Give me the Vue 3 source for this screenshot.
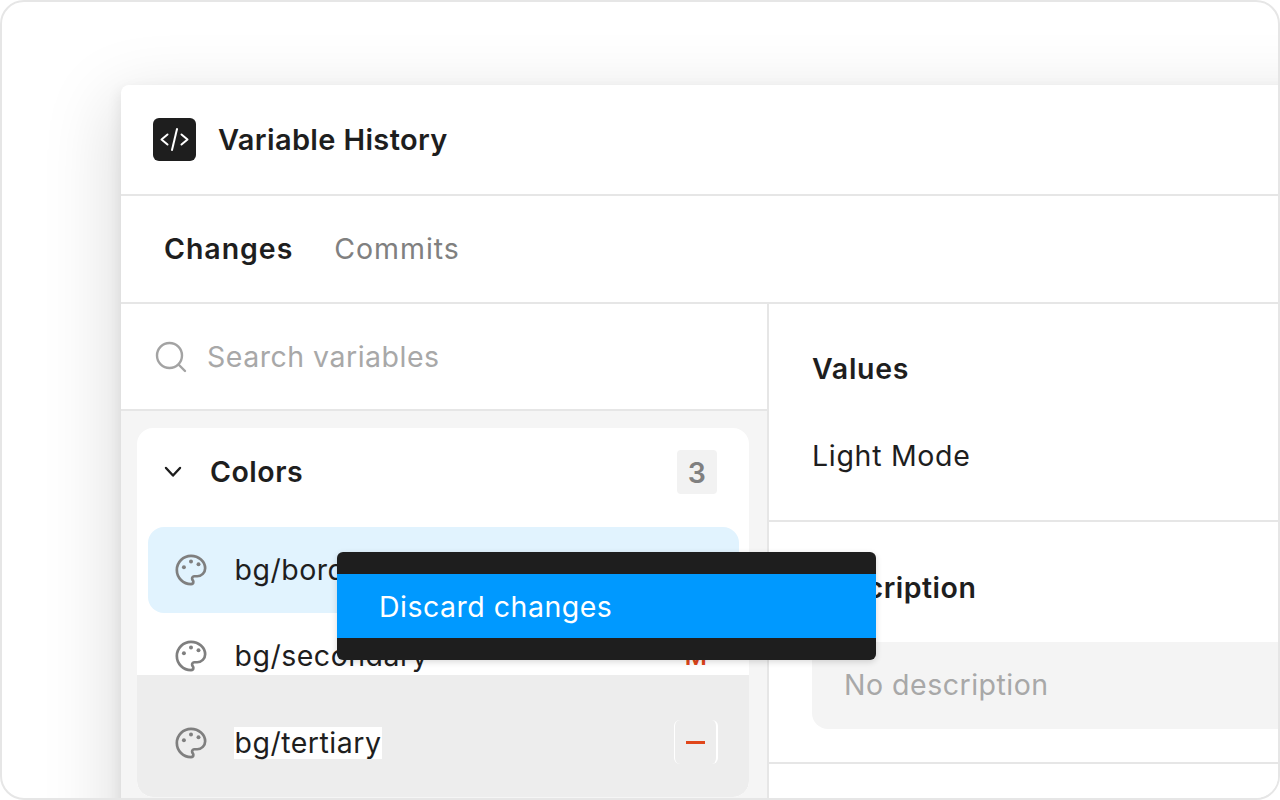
<template>
  <div class="frame">
    <div class="window">
      <header class="app-header">
        <div class="app-logo">
          <svg width="43" height="43" viewBox="0 0 43 43" fill="none" stroke="#fff" stroke-width="2" stroke-linecap="round" stroke-linejoin="round">
            <path d="M14.500 16.500L8.500 21.500L14.500 26.500" />
            <path d="M28.500 16.500L34.500 21.500L28.500 26.500" />
            <path d="M24 11L19 32" />
          </svg>
        </div>
        <h1 class="app-title">Variable History</h1>
      </header>

      <nav class="tabs">
        <span class="tab active">Changes</span>
        <span class="tab">Commits</span>
      </nav>

      <div class="body">
        <aside class="sidebar">
          <div class="search">
            <svg width="32" height="32" viewBox="0 0 32 32" fill="none" stroke="#a3a3a3" stroke-width="2.400" stroke-linecap="round">
              <circle cx="14.500" cy="14.500" r="12.500" />
              <path d="M24 24L30 30" />
            </svg>
            <span class="search-text">Search variables</span>
          </div>

          <div class="list-area">
            <div class="card">
              <div class="card-head">
                <svg class="chevron" width="18" height="12" viewBox="0 0 18 12" fill="none" stroke="#1e1e1e" stroke-width="2.400" stroke-linecap="round" stroke-linejoin="round">
                  <path d="M2 2L9 9.500L16 2" />
                </svg>
                <span class="card-title">Colors</span>
                <span class="count">3</span>
              </div>

              <div class="row selected">
                <svg class="palette" width="34" height="34" viewBox="0 0 24 24" fill="none" stroke="#7f7f7f" stroke-width="1.900" stroke-linejoin="round">
                  <path :d="palettePath" />
                  <circle v-for="d in paletteDots" :key="d[0]" :cx="d[0]" :cy="d[1]" r="1.400" fill="#7f7f7f" stroke="none" />
                </svg>
                <span class="row-name">bg/border</span>
              </div>

              <div class="row-clip">
                <div class="row">
                  <svg class="palette" width="34" height="34" viewBox="0 0 24 24" fill="none" stroke="#7f7f7f" stroke-width="1.900" stroke-linejoin="round">
                    <path :d="palettePath" />
                    <circle v-for="d in paletteDots" :key="d[0]" :cx="d[0]" :cy="d[1]" r="1.400" fill="#7f7f7f" stroke="none" />
                  </svg>
                  <span class="row-name">bg/secondary</span>
                  <span class="status">M</span>
                </div>
              </div>

              <div class="row hovered">
                <svg class="palette" width="34" height="34" viewBox="0 0 24 24" fill="none" stroke="#7f7f7f" stroke-width="1.900" stroke-linejoin="round">
                  <path :d="palettePath" />
                  <circle v-for="d in paletteDots" :key="d[0]" :cx="d[0]" :cy="d[1]" r="1.400" fill="#7f7f7f" stroke="none" />
                </svg>
                <span class="row-name lit">bg/tertiary</span>
                <span class="status dash"><i></i></span>
              </div>
            </div>
          </div>
        </aside>

        <main class="detail">
          <section class="values">
            <h2 class="detail-title">Values</h2>
            <p class="mode">Light Mode</p>
          </section>
          <section class="description">
            <h2 class="detail-title">Description</h2>
            <div class="desc-box">No description</div>
          </section>
        </main>

        <div class="context-menu">
          <div class="menu-item">Discard changes</div>
        </div>
      </div>
    </div>
  </div>
</template>

<script setup>
const palettePath =
  'M12 2C6.500 2 2 6.500 2 12s4.500 10 10 10c.926 0 1.648-.746 1.648-1.688 0-.437-.18-.835-.437-1.125-.29-.289-.438-.652-.438-1.125a1.640 1.640 0 0 1 1.668-1.668h1.996c3.051 0 5.555-2.503 5.555-5.554C21.965 6.012 17.461 2 12 2z';
const paletteDots = [
  [7, 10.100],
  [12, 6],
  [17.300, 7.900],
];
</script>

<style>
html,
body {
  margin: 0;
  background: #fff;
}
</style>

<style scoped>
.frame {
  width: 1280px;
  height: 800px;
  box-sizing: border-box;
  border: 2px solid #e6e6e6;
  border-radius: 24px;
  background: #fff;
  overflow: hidden;
  padding: 83px 0 0 119px;
  font-family: Inter, "Liberation Sans", sans-serif;
  font-size: 28.500px;
  letter-spacing: 0.500px;
  color: #1e1e1e;
}

.window {
  width: 1300px;
  height: 800px;
  background: #fff;
  border-radius: 8px 0 0 0;
  box-shadow: -10px 14px 70px rgba(0, 0, 0, 0.13), -2px 4px 14px rgba(0, 0, 0, 0.07);
}

.app-header {
  height: 109px;
  display: flex;
  align-items: center;
  gap: 22px;
  padding-left: 32px;
  border-bottom: 2px solid #e6e6e6;
}

.app-logo {
  width: 43px;
  height: 43px;
  border-radius: 6px;
  background: #1e1e1e;
}

.app-title {
  margin: 0;
  font-size: 29px;
  font-weight: 600;
  letter-spacing: 0.350px;
}

.tabs {
  height: 108px;
  box-sizing: border-box;
  display: flex;
  align-items: center;
  gap: 41px;
  padding: 0 0 2px 43px;
  border-bottom: 2px solid #e6e6e6;
  letter-spacing: 0.950px;
}

.tab {
  color: #808080;
}

.tab.active {
  color: #1e1e1e;
  font-weight: 600;
}

.body {
  position: relative;
  display: flex;
}

.sidebar {
  width: 646px;
  border-right: 2px solid #e6e6e6;
}

.search {
  height: 105px;
  display: flex;
  align-items: center;
  gap: 20px;
  padding-left: 34px;
  border-bottom: 2px solid #e6e6e6;
}

.search-text {
  color: #a8a8a8;
}

.list-area {
  background: #f5f5f5;
  padding: 17px 18px 0 16px;
  height: 500px;
}

.card {
  background: #fff;
  border-radius: 16px;
  width: 612px;
  height: 369px;
  overflow: hidden;
  display: flex;
  flex-direction: column;
}

.card-head {
  height: 99px;
  flex: none;
  display: flex;
  align-items: center;
  padding: 0 32px 13px 27px;
  box-sizing: border-box;
}

.chevron {
  margin-right: 28px;
  margin-top: 2px;
}

.card-title {
  font-weight: 600;
}

.count {
  margin-left: auto;
  margin-top: 2px;
  width: 40px;
  height: 44px;
  border-radius: 4px;
  background: #f2f2f2;
  color: #808080;
  font-weight: 600;
  display: flex;
  align-items: center;
  justify-content: center;
}

.row {
  height: 86px;
  flex: none;
  display: flex;
  align-items: center;
  gap: 26.500px;
  padding: 0 21px 0 26px;
  margin: 0 10px 0 11px;
  border-radius: 16px;
}

.row.selected {
  background: #e1f3fe;
}

.row-clip {
  height: 62px;
  flex: none;
  overflow: hidden;
}

.row.hovered {
  height: 122px;
  box-sizing: border-box;
  margin: 0;
  padding: 14px 31px 0 37px;
  background: #ededed;
  border-radius: 0 0 16px 16px;
}

.palette {
  flex: none;
}

.row-name {
  line-height: 34px;
}

.row-name.lit {
  background: #fff;
  box-shadow: 0 0 0 1px #fff;
  line-height: 30px;
}

.status {
  margin-left: auto;
  width: 44px;
  height: 44px;
  border-radius: 6px;
  background: #fff;
  color: #e0461a;
  font-size: 24px;
  font-weight: 600;
  padding-top: 1px;
  box-sizing: border-box;
  display: flex;
  align-items: center;
  justify-content: center;
}

.status.dash {
  background: transparent;
  padding-top: 0;
  margin-top: -2px;
  border-left: 1px solid #fff;
  border-right: 2px solid #fff;
}

.status.dash i {
  display: block;
  width: 19px;
  height: 3px;
  background: #e0461a;
}

.detail {
  flex: 1;
}

.values {
  height: 218px;
  box-sizing: border-box;
  padding: 48px 0 0 43px;
  border-bottom: 2px solid #e6e6e6;
  letter-spacing: 0.700px;
}

.detail-title {
  margin: 0;
  font-size: 28.500px;
  line-height: 34px;
  font-weight: 600;
}

.mode {
  margin: 53px 0 0;
  line-height: 34px;
}

.description {
  height: 242px;
  box-sizing: border-box;
  padding: 49px 0 0 43px;
  border-bottom: 2px solid #e6e6e6;
}

.desc-box {
  margin-top: 37px;
  height: 87px;
  border-radius: 16px 0 0 16px;
  background: #f4f4f4;
  color: #a8a8a8;
  display: flex;
  align-items: center;
  padding: 0 0 2px 32px;
  box-sizing: border-box;
}

.context-menu {
  position: absolute;
  left: 216px;
  top: 248px;
  width: 539px;
  box-sizing: border-box;
  padding: 22px 0;
  background: #1e1e1e;
  border-radius: 6px;
  box-shadow: 0 2px 6px rgba(0, 0, 0, 0.15);
}

.menu-item {
  height: 64px;
  display: flex;
  align-items: center;
  padding-left: 42px;
  background: #0099ff;
  color: #fff;
}
</style>
